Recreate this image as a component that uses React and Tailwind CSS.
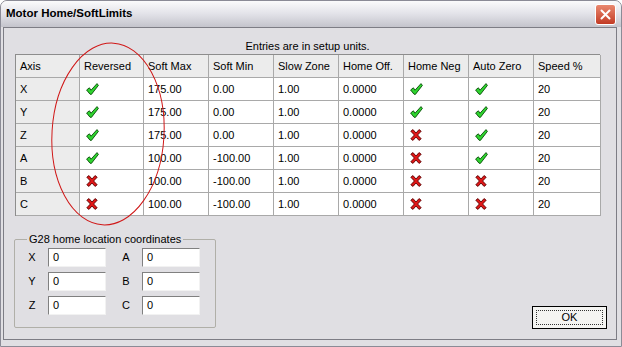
import React from 'react';

const axes = [
    { axis: 'X', rev: true, max: '175.00', min: '0.00', neg: true, zero: true },
    { axis: 'Y', rev: true, max: '175.00', min: '0.00', neg: true, zero: true },
    { axis: 'Z', rev: true, max: '175.00', min: '0.00', neg: false, zero: true },
    { axis: 'A', rev: true, max: '100.00', min: '-100.00', neg: false, zero: true },
    { axis: 'B', rev: false, max: '100.00', min: '-100.00', neg: false, zero: false },
    { axis: 'C', rev: false, max: '100.00', min: '-100.00', neg: false, zero: false },
];

const headers = ['Axis', 'Reversed', 'Soft Max', 'Soft Min', 'Slow Zone', 'Home Off.', 'Home Neg', 'Auto Zero', 'Speed %'];

const Check = () => (
    <svg width="13" height="12" viewBox="0 0 13 12">
        <polygon points="0.6,7 3.4,4.8 5,7.2 11,0.6 12.4,2.4 5.4,11.4 4,11.2" fill="#2fd42f" stroke="#0b4d0b" strokeWidth="0.9" strokeLinejoin="round" />
    </svg>
);

const Cross = () => (
    <svg width="12" height="12" viewBox="0 0 12 12">
        <polygon points="0.8,2.2 3,0.6 6,4 9,0.6 11.2,2.2 7.6,6 11.2,9.8 9,11.4 6,8 3,11.4 0.8,9.8 4.4,6" fill="#e01616" stroke="#5c0000" strokeWidth="0.9" strokeLinejoin="round" />
    </svg>
);

const Flag = ({ on }) => (on ? <Check /> : <Cross />);

const Cell = ({ children, head }) => (
    <div className={`h-[23px] flex items-center px-[4px] border-r border-b border-[#a9a9a9] ${head ? 'bg-[#ececec]' : 'bg-white'}`}>
        {children}
    </div>
);

const CoordField = ({ label }) => (
    <div className="flex items-center">
        <span className="w-[18px] mr-[7px] text-center">{label}</span>
        <div className="w-[58px] h-[19px] bg-white border border-t-[#808080] border-l-[#808080] border-r-[#f2f2f2] border-b-[#f2f2f2] flex items-center px-[4px]">0</div>
    </div>
);

export default function App() {
    return (
        <div className="relative w-[622px] h-[347px] bg-[#e0dfe3] border border-[#8b8b96] rounded-t-[7px] overflow-hidden flex flex-col font-['Liberation_Sans',Arial,sans-serif] text-[11px] text-black">
            <div className="h-[26px] shrink-0 flex items-center justify-between pl-[5px] pr-[5px] bg-gradient-to-b from-[#fbfbfc] via-[#e2e2e8] to-[#c4c4cc]">
                <span className="font-bold text-[11.5px]">Motor Home/SoftLimits</span>
                <div className="w-[21px] h-[21px] rounded-[3px] border border-white bg-gradient-to-b from-[#e9876e] to-[#c23a24] flex items-center justify-center">
                    <svg width="11" height="11" viewBox="0 0 11 11">
                        <path d="M1.5 1.5 L9.5 9.5 M9.5 1.5 L1.5 9.5" stroke="white" strokeWidth="2" strokeLinecap="round" />
                    </svg>
                </div>
            </div>

            <div className="flex-1 ml-[2px] mr-[4px] mb-[6px] border border-[#7d7d85] flex flex-col pt-[11px] pl-[11px] pr-[9px] pb-[10px]">
                <div className="w-[585px] text-center leading-[14px]">Entries are in setup units.</div>

                <div className="mt-[1px] w-[585px] grid grid-cols-[64px_64px_65px_65px_65px_65px_65px_65px_67px] border-l border-t border-[#8d8d8d]">
                    {headers.map((h) => (
                        <Cell key={h} head>{h}</Cell>
                    ))}
                    {axes.map((r) => (
                        <React.Fragment key={r.axis}>
                            <Cell head>{r.axis}</Cell>
                            <Cell><span className="pl-[2px]"><Flag on={r.rev} /></span></Cell>
                            <Cell>{r.max}</Cell>
                            <Cell>{r.min}</Cell>
                            <Cell>1.00</Cell>
                            <Cell>0.0000</Cell>
                            <Cell><span className="pl-[2px]"><Flag on={r.neg} /></span></Cell>
                            <Cell><span className="pl-[2px]"><Flag on={r.zero} /></span></Cell>
                            <Cell>20</Cell>
                        </React.Fragment>
                    ))}
                </div>

                <div className="flex-1 flex items-end justify-between">
                    <fieldset className="ml-[-1px] mb-[1px] w-[202px] h-[95px] border border-[#b0afa8] rounded-[2px] pl-[8px] pt-[2px]">
                        <legend className="px-[2px] ml-[4px] leading-[13px]">G28 home location coordinates</legend>
                        <div className="grid grid-cols-[83px_83px] gap-x-[11px] gap-y-[5px]">
                            <CoordField label="X" />
                            <CoordField label="A" />
                            <CoordField label="Y" />
                            <CoordField label="B" />
                            <CoordField label="Z" />
                            <CoordField label="C" />
                        </div>
                    </fieldset>

                    <button className="w-[75px] h-[23px] border border-black bg-[#f4f4f2] p-[3px] text-[11px]">
                        <div className="w-full h-full border border-dotted border-[#333] flex items-center justify-center">OK</div>
                    </button>
                </div>
            </div>

            <svg className="absolute left-0 top-0 pointer-events-none" width="622" height="347">
                <ellipse cx="107" cy="133" rx="56" ry="91" transform="rotate(3.5 107 133)" fill="none" stroke="#d01818" strokeWidth="1" />
            </svg>
        </div>
    );
}
